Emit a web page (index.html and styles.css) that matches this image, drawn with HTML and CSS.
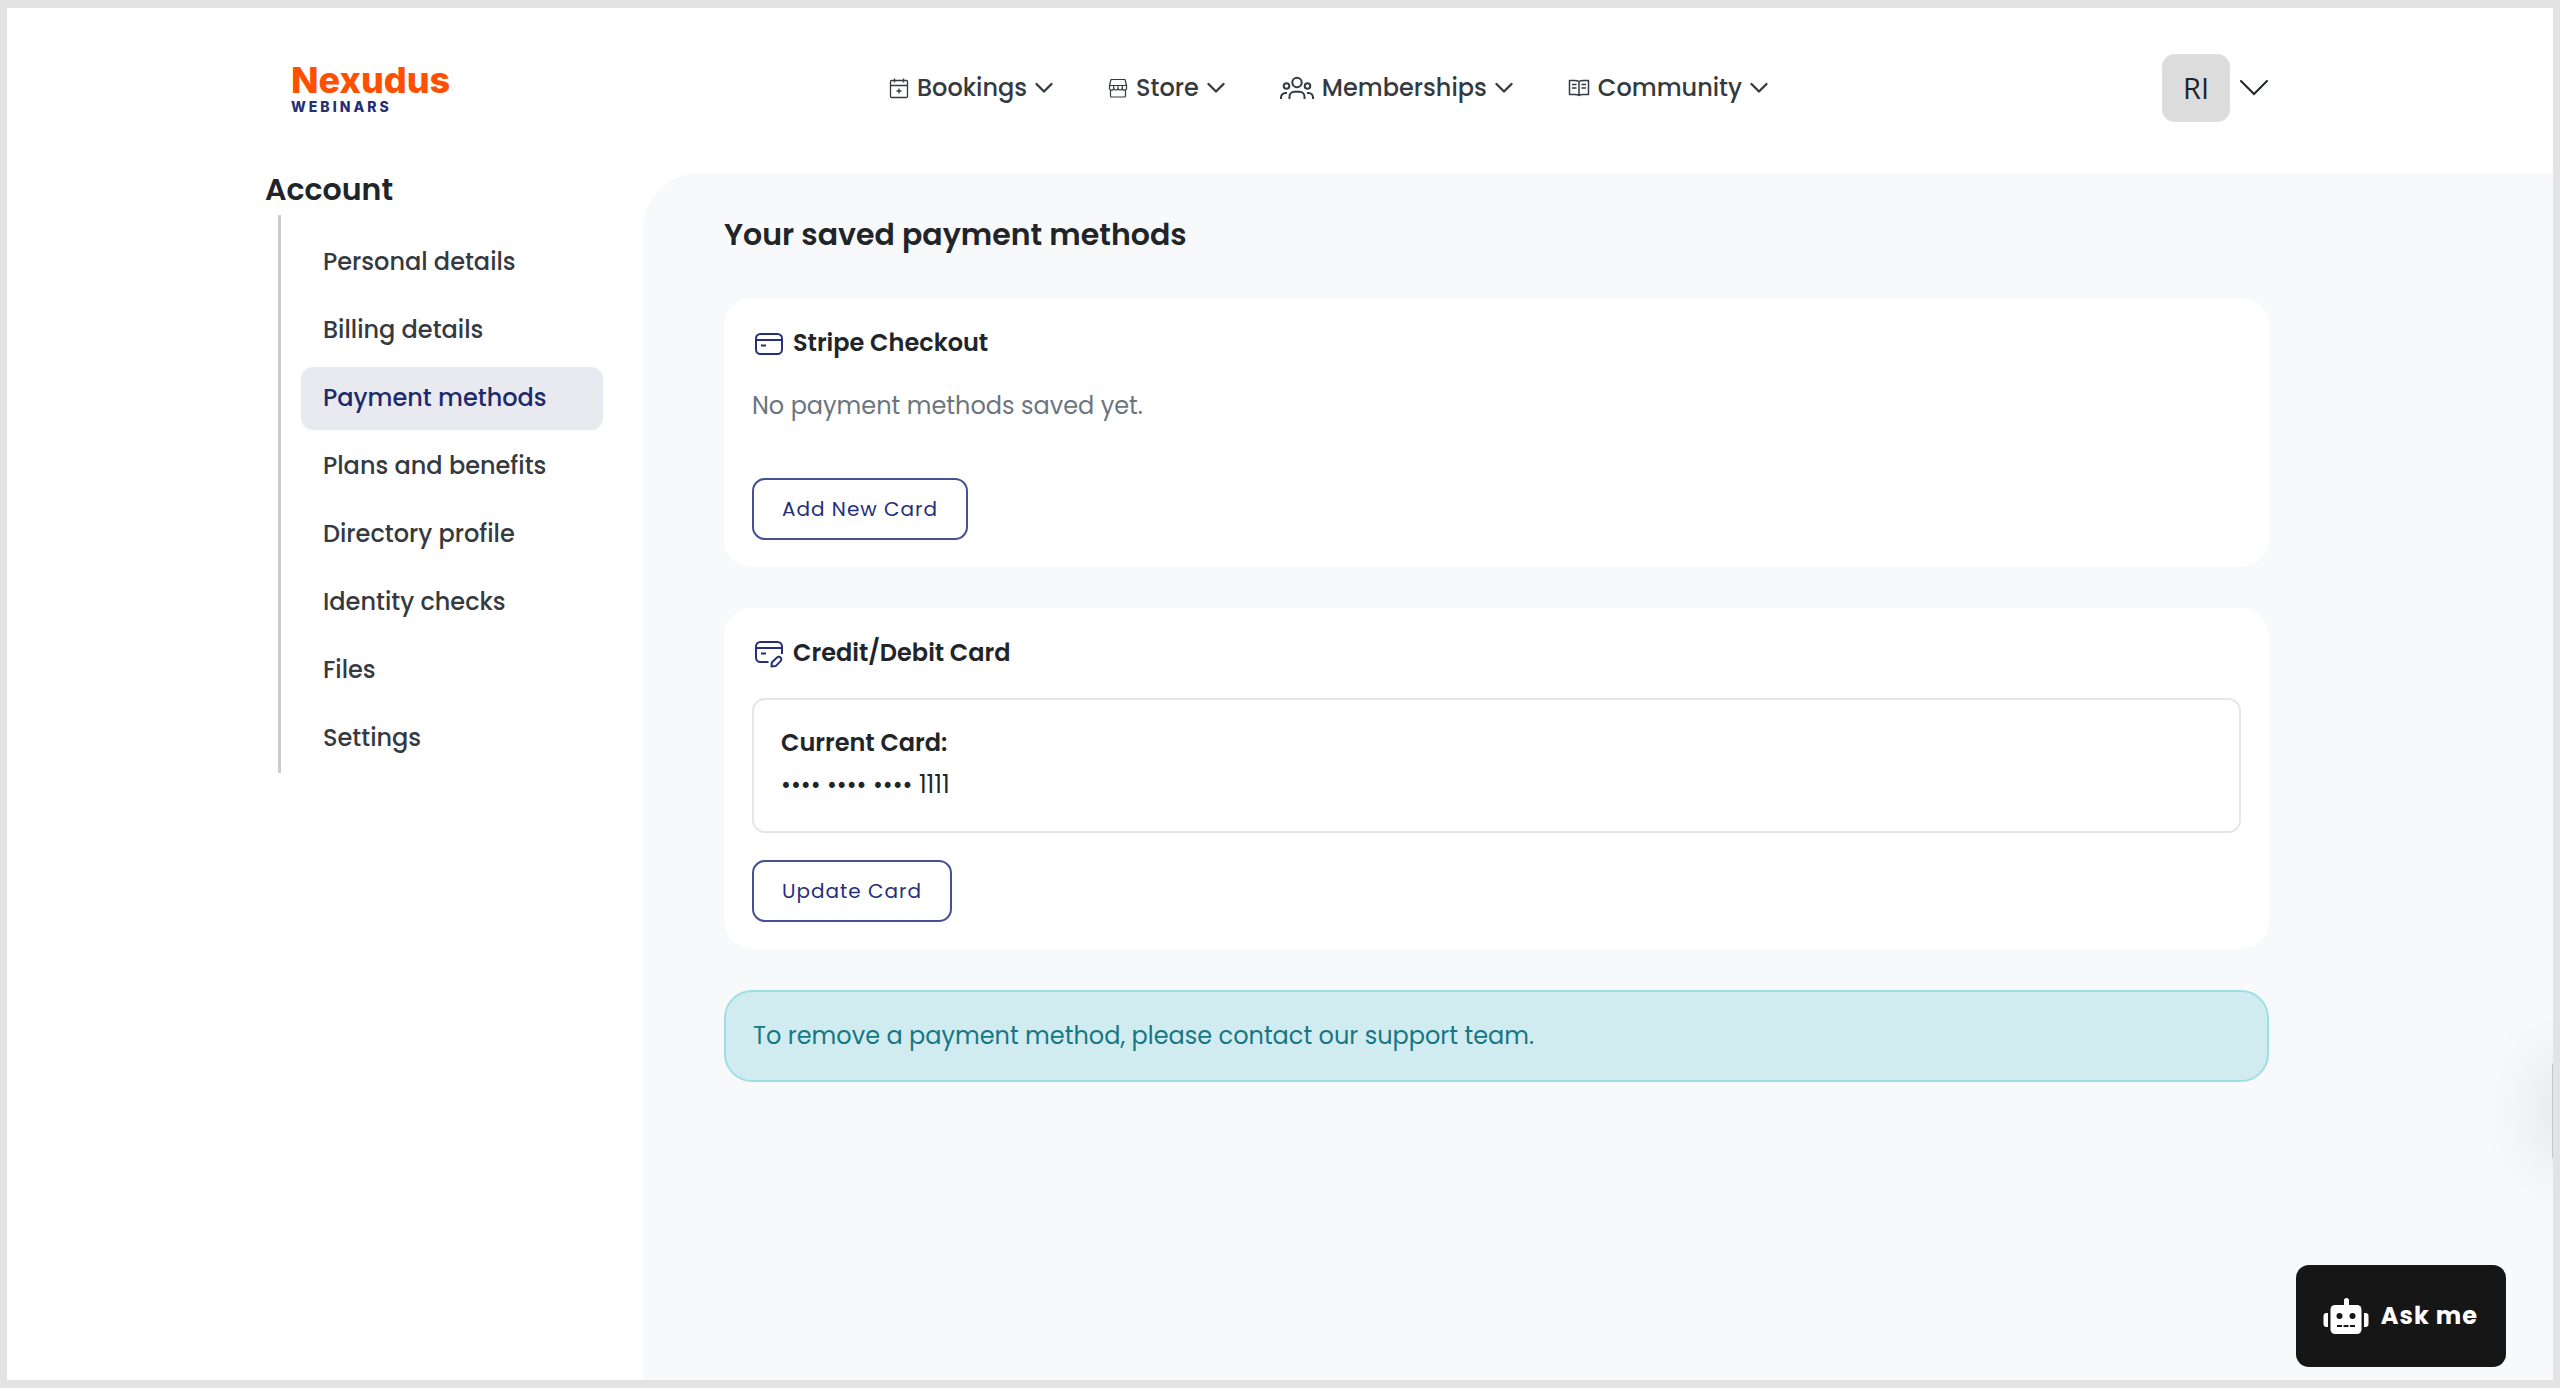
FILE: index.html
```html
<!DOCTYPE html>
<html lang="en">
<head>
<meta charset="utf-8">
<meta name="viewport" content="width=device-width, initial-scale=1">
<title>Payment methods</title>
<link rel="stylesheet" href="styles.css">
</head>
<body>
<svg class="defs" aria-hidden="true">
  <symbol id="chevron" viewBox="0 0 18 12"><path d="M1.5 2 9 9.500 16.500 2" fill="none" stroke="currentColor" stroke-width="2.300" stroke-linecap="round" stroke-linejoin="round"/></symbol>
</svg>
<div class="app">
  <header class="header">
    <a class="logo" href="#"><span class="logo-name">Nexudus</span><span class="logo-sub">WEBINARS</span></a>
    <nav class="nav" aria-label="Main">
      <button class="nav-item" type="button">
        <svg class="icon-s" viewBox="0 0 20 22" fill="none" stroke="currentColor" stroke-width="1.300"><rect x="1.500" y="3.500" width="17" height="17" rx="1"/><path d="M1.500 8.500h17M5.500 1.500v4M14.500 1.500v4M10 11.500v5M7.500 14h5"/></svg>
        <span>Bookings</span><svg class="chev"><use href="#chevron"/></svg>
      </button>
      <button class="nav-item" type="button">
        <svg class="icon-s" viewBox="0 0 20 22" fill="none" stroke="currentColor" stroke-width="1.200" stroke-linejoin="round"><path d="M3 2.500h14l1.500 6v2a2 2 0 0 1-4.200 1 2.300 2.300 0 0 1-4.300 0 2.300 2.300 0 0 1-4.300 0 2 2 0 0 1-4.200-1v-2zM1.500 8.500h17M5.700 8.500v3M10 8.500v3M14.300 8.500v3M2.500 13v6a1 1 0 0 0 1 1h13a1 1 0 0 0 1-1v-6"/></svg>
        <span>Store</span><svg class="chev"><use href="#chevron"/></svg>
      </button>
      <button class="nav-item" type="button">
        <svg class="icon-m" viewBox="0 0 34 24" fill="none" stroke="currentColor" stroke-width="2"><circle cx="17" cy="6.500" r="4.700"/><circle cx="6.500" cy="10" r="2.800"/><circle cx="27.500" cy="10" r="2.800"/><path d="M9.500 23v-2.500a4.800 4.800 0 0 1 4.800-4.800h5.400a4.800 4.800 0 0 1 4.800 4.800V23M1 23v-1.500a4.600 4.600 0 0 1 4.600-4.600H7M33 23v-1.500a4.600 4.600 0 0 0-4.600-4.600H27"/></svg>
        <span>Memberships</span><svg class="chev"><use href="#chevron"/></svg>
      </button>
      <button class="nav-item" type="button">
        <svg class="icon-l" viewBox="0 0 22 22" fill="none" stroke="currentColor" stroke-width="1.500" stroke-linejoin="round"><path d="M11 4.500C9.500 3.500 8 3.500 6.500 3.500H1.500v14h5.500c1.500 0 3 0 4 1 1-1 2.500-1 4-1h5.500v-14h-5c-1.500 0-3 0-4.500 1zM11 4.500v14M4 7.500h4.500M4 11h4.500M13.500 7.500H18M13.500 11H18"/></svg>
        <span>Community</span><svg class="chev"><use href="#chevron"/></svg>
      </button>
    </nav>
    <button class="user" type="button" aria-label="Account menu">
      <span class="avatar">RI</span>
      <svg class="user-chev" viewBox="0 0 28 18"><path d="M1 2 14 15 27 2" fill="none" stroke="currentColor" stroke-width="2" stroke-linecap="round"/></svg>
    </button>
  </header>
  <div class="body">
    <aside class="sidebar">
      <h2 class="sidebar-title">Account</h2>
      <ul class="menu">
        <li><a class="menu-link" href="#">Personal details</a></li>
        <li><a class="menu-link" href="#">Billing details</a></li>
        <li><a class="menu-link active" href="#" aria-current="page">Payment methods</a></li>
        <li><a class="menu-link" href="#">Plans and benefits</a></li>
        <li><a class="menu-link" href="#">Directory profile</a></li>
        <li><a class="menu-link" href="#">Identity checks</a></li>
        <li><a class="menu-link" href="#">Files</a></li>
        <li><a class="menu-link" href="#">Settings</a></li>
      </ul>
    </aside>
    <main class="panel">
      <h1 class="page-title">Your saved payment methods</h1>
      <section class="card">
        <h3 class="card-title">
          <svg class="card-icon" viewBox="0 0 36 36" fill="none" stroke="currentColor" stroke-width="2"><rect x="4" y="9" width="26" height="20" rx="4.500"/><path d="M4 15h26M9 20.500h5"/></svg>
          Stripe Checkout
        </h3>
        <p class="empty">No payment methods saved yet.</p>
        <button class="btn" type="button">Add New Card</button>
      </section>
      <section class="card">
        <h3 class="card-title">
          <svg class="card-icon" viewBox="0 0 36 36" fill="none" stroke="currentColor" stroke-width="2" stroke-linejoin="round"><path d="M16.500 27H8.500A4.500 4.500 0 0 1 4 22.500V11.500A4.500 4.500 0 0 1 8.500 7h17a4.500 4.500 0 0 1 4.500 4.500V19M4 13h26M9 18.500h5M19.500 31.500l.300-4 5.200-5a2.400 2.400 0 0 1 3.600 0 2.500 2.500 0 0 1 0 3.600l-5 5z"/></svg>
          Credit/Debit Card
        </h3>
        <div class="current">
          <strong>Current Card:</strong>
          <span>•••• •••• •••• 1111</span>
        </div>
        <button class="btn" type="button">Update Card</button>
      </section>
      <p class="alert">To remove a payment method, please contact our support team.</p>
    </main>
  </div>
  <div class="edge-tab"></div>
  <button class="ask" type="button">
    <svg class="bot" viewBox="0 0 46 38" fill="currentColor"><rect x="21" y="1" width="5" height="10" rx="2.500"/><path d="M5 16H3.500A3 3 0 0 0 .500 19v8a3 3 0 0 0 3 3H5zM41 16h1.500a3 3 0 0 1 3 3v8a3 3 0 0 1-3 3H41z"/><rect x="7.500" y="8" width="31" height="29" rx="4.500"/><g fill="#161616"><circle cx="16.500" cy="19" r="3"/><circle cx="29.500" cy="19" r="3"/><path d="M14 28h5v2h-5zM20.500 28h5v2h-5zM27 28h5v2h-5z"/></g></svg>
    <span>Ask me</span>
  </button>
</div>
</body>
</html>
```
FILE: styles.css
```css
* { box-sizing: border-box; }

body {
  margin: 0;
  padding: 8px 7px;
  background: #e3e3e3;
  color: #212529;
  font-family: Poppins, Inter, "Liberation Sans", sans-serif;
  font-size: 24px;
  line-height: 36px;
}

h1, h2, h3, p, ul { margin: 0; padding: 0; }
ul { list-style: none; }
a { color: inherit; text-decoration: none; }
button {
  border: 0;
  padding: 0;
  background: none;
  color: inherit;
  font: inherit;
  cursor: pointer;
}
svg { display: block; flex: none; }
.defs { position: absolute; width: 0; height: 0; }

.app {
  position: relative;
  display: flex;
  flex-direction: column;
  min-height: calc(100vh - 16px);
  background: #fff;
  overflow: hidden;
}

.header {
  display: flex;
  align-items: center;
  height: 165px;
  padding: 0 285px 6px 284px;
}
.logo {
  flex: 0 0 598px;
  display: flex;
  flex-direction: column;
  padding-top: 2px;
  font-family: Inter, "Liberation Sans", sans-serif;
}
.logo-name {
  color: #ff4f00;
  font-size: 36px;
  font-weight: 800;
  line-height: 36px;
}
.logo-sub {
  color: #262f75;
  font-size: 14px;
  font-weight: 800;
  line-height: 18px;
  letter-spacing: 3px;
}
.nav { display: flex; gap: 55px; color: #343a40; }
.nav-item {
  display: flex;
  align-items: center;
  gap: 8px;
  font-weight: 500;
}
.icon-s { width: 20px; height: 22px; }
.icon-m { width: 34px; height: 24px; }
.icon-l { width: 22px; height: 22px; }
.chev { width: 18px; height: 12px; }
.user { display: flex; align-items: center; gap: 10px; margin-left: auto; }
.avatar {
  width: 68px;
  height: 68px;
  border-radius: 13px;
  background: #dcdcdc;
  font-family: "Open Sans", sans-serif;
  font-size: 29px;
  line-height: 68px;
  text-align: center;
}
.user-chev { width: 28px; height: 18px; }

.body { display: flex; flex: 1; }
.sidebar { flex: 0 0 636px; padding: 0 40px 0 258px; }
.sidebar-title { font-size: 30px; font-weight: 600; line-height: 34px; }
.menu {
  display: flex;
  flex-direction: column;
  gap: 5px;
  margin: 8px 0 0 13px;
  padding: 16px 0 3px 20px;
  border-left: 3px solid #ccc;
}
.menu-link {
  display: block;
  padding: 13px 22px 14px;
  border-radius: 12px;
  color: #343a40;
  font-weight: 500;
}
.menu-link.active { background: #e9eaef; color: #1f2a6c; }

.panel {
  flex: 1;
  min-width: 0;
  padding: 40px 284px 40px 81px;
  border-top-left-radius: 56px;
  background: #f8f9fb;
}
.page-title {
  margin-bottom: 41px;
  font-size: 30px;
  font-weight: 600;
  line-height: 44px;
}
.card {
  margin-bottom: 41px;
  padding: 27px 28px;
  border-radius: 28px;
  background: #fff;
}
.card-title {
  display: flex;
  align-items: center;
  gap: 5px;
  margin-bottom: 27px;
  font-size: 24px;
  font-weight: 600;
}
.card-icon { width: 36px; height: 36px; color: #262f7a; }
.empty { margin-bottom: 54px; color: #6c757d; }
.btn {
  display: block;
  padding: 11px 28px;
  border: 2px solid #465092;
  border-radius: 13px;
  color: #262f7a;
  font-size: 20px;
  letter-spacing: 1px;
}
.current {
  display: flex;
  flex-direction: column;
  margin-bottom: 27px;
  padding: 22px 27px 25px;
  border: 2px solid #e3e6ea;
  border-radius: 13px;
  line-height: 42px;
}
.current strong { font-weight: 600; }
.alert {
  padding: 26px 27px;
  border: 2px solid #9fdfe3;
  border-radius: 28px;
  background: #d1ecf1;
  color: #177782;
}

.edge-tab {
  position: absolute;
  top: 1054px;
  right: -39px;
  width: 40px;
  height: 98px;
  border-radius: 4px;
  background: #c4c5c7;
  box-shadow: 0 0 72px rgba(0, 0, 0, 0.16);
}
.ask {
  position: absolute;
  right: 47px;
  bottom: 13px;
  display: flex;
  align-items: center;
  gap: 12px;
  padding: 32px 28px 32px 27px;
  border-radius: 13px;
  background: #161616;
  color: #fff;
  font-weight: 700;
  letter-spacing: 1px;
}
.bot { width: 46px; height: 38px; }
```
